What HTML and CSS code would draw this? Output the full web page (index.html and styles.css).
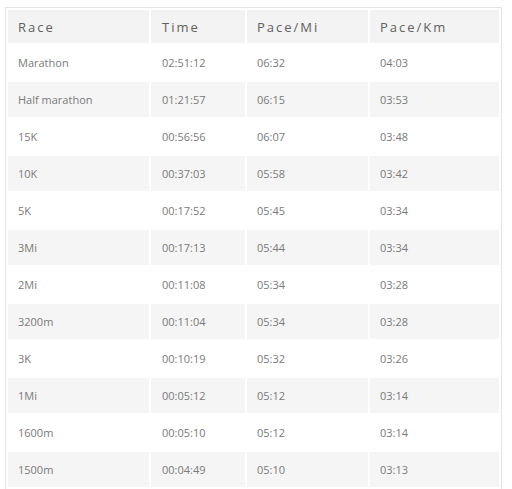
FILE: index.html
```html
<!DOCTYPE html>
<html>
<head>
<meta charset="utf-8">
<link rel="stylesheet" href="styles.css">
</head>
<body>
<div class="wrap">
<table class="times">
<colgroup><col class="c1"><col class="c2"><col class="c3"><col class="c4"></colgroup>
<thead>
<tr><th>Race</th><th>Time</th><th>Pace/Mi</th><th>Pace/Km</th></tr>
</thead>
<tbody>
<tr><td>Marathon</td><td>02:51:12</td><td>06:32</td><td>04:03</td></tr>
<tr><td>Half marathon</td><td>01:21:57</td><td>06:15</td><td>03:53</td></tr>
<tr><td>15K</td><td>00:56:56</td><td>06:07</td><td>03:48</td></tr>
<tr><td>10K</td><td>00:37:03</td><td>05:58</td><td>03:42</td></tr>
<tr><td>5K</td><td>00:17:52</td><td>05:45</td><td>03:34</td></tr>
<tr><td>3Mi</td><td>00:17:13</td><td>05:44</td><td>03:34</td></tr>
<tr><td>2Mi</td><td>00:11:08</td><td>05:34</td><td>03:28</td></tr>
<tr><td>3200m</td><td>00:11:04</td><td>05:34</td><td>03:28</td></tr>
<tr><td>3K</td><td>00:10:19</td><td>05:32</td><td>03:26</td></tr>
<tr><td>1Mi</td><td>00:05:12</td><td>05:12</td><td>03:14</td></tr>
<tr><td>1600m</td><td>00:05:10</td><td>05:12</td><td>03:14</td></tr>
<tr><td>1500m</td><td>00:04:49</td><td>05:10</td><td>03:13</td></tr>
</tbody>
</table>
</div>
</body>
</html>
```
FILE: styles.css
```css
html, body {
  margin: 0;
  padding: 0;
  background: #fff;
}
body {
  padding: 7px 0 0 5px;
  font-family: "Open Sans", "Liberation Sans", sans-serif;
}
.wrap {
  width: 495px;
  border: 1px solid #e3e3e3;
  border-bottom: none;
}
.times {
  border-collapse: separate;
  border-spacing: 2px;
  table-layout: fixed;
  width: 495px;
}
.c1 { width: 141px; }
.c2 { width: 94px; }
.c3 { width: 121px; }
.c4 { width: 129px; }
.times th {
  height: 33px;
  padding: 0 0 0 10px;
  text-align: left;
  font-weight: normal;
  font-size: 13px;
  letter-spacing: 2px;
  color: #606060;
  background: #f3f3f3;
}
.times th:nth-child(2) { padding-left: 11px; }
.times td {
  height: 35px;
  padding: 0 0 0 10px;
  font-size: 11px;
  color: #7a7a7a;
}
.times td:nth-child(2) { padding-left: 11px; }
.times tbody tr:nth-child(even) td {
  background: #f5f5f5;
}
```
